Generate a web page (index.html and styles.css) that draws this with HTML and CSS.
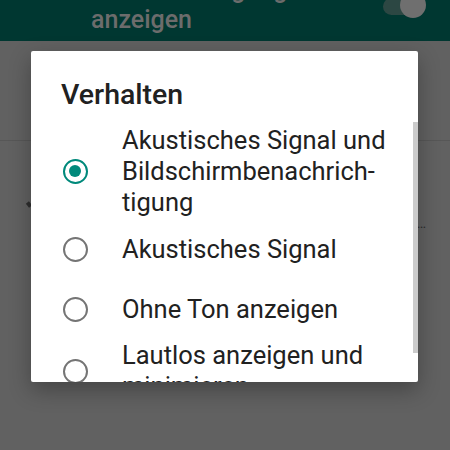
FILE: index.html
```html
<!DOCTYPE html>
<html>

<head>
    <meta name="viewport" content="width=device-width,initial-scale=1.0">
    <title>Verhalten</title>
    <link rel="stylesheet" href="styles.css">
</head>

<body>
    <div class="screen">
        <header class="app-bar">
            <div class="app-title">Benachrichtigungen anzeigen</div>
            <div class="switch"><span class="switch-thumb"></span></div>
        </header>
        <div class="prefs">
            <div class="pref pref-top"></div>
            <div class="pref pref-summary">
                <span class="mark"></span>
                <span class="more">…</span>
            </div>
        </div>

        <div class="dialog">
            <div class="dialog-title">Verhalten</div>
            <ul class="options">
                <li class="option">
                    <span class="radio checked"></span>
                    <span class="label">Akustisches Signal und Bildschirmbenachrich&shy;tigung</span>
                </li>
                <li class="option">
                    <span class="radio"></span>
                    <span class="label">Akustisches Signal</span>
                </li>
                <li class="option">
                    <span class="radio"></span>
                    <span class="label">Ohne Ton anzeigen</span>
                </li>
                <li class="option">
                    <span class="radio"></span>
                    <span class="label">Lautlos anzeigen und minimieren</span>
                </li>
            </ul>
            <div class="scrollbar"></div>
        </div>
    </div>
</body>

</html>
```

FILE: styles.css
```css
body {
    margin: 0;
    padding: 0;
    font-family: Roboto, "Noto Sans", sans-serif;
    background: #616161;
}

.screen {
    position: relative;
    width: 450px;
    height: 450px;
    overflow: hidden;
    background: #616161;
}

.app-bar {
    position: relative;
    height: 41px;
    background: #003731;
    overflow: hidden;
    padding-left: 91px;
    box-sizing: border-box;
}

.app-title {
    width: 290px;
    margin-top: -25px;
    font-size: 25px;
    line-height: 30px;
    font-weight: 500;
    color: #6c6c6c;
}

.switch {
    position: absolute;
    left: 383px;
    top: -2px;
    width: 37px;
    height: 17px;
    border-radius: 9px;
    background: #2c4743;
}

.switch-thumb {
    position: absolute;
    left: 17px;
    top: -6px;
    width: 26px;
    height: 26px;
    border-radius: 50%;
    background: #6f6f6f;
}

.pref-top {
    height: 99px;
    border-bottom: 1px solid #575757;
}

.pref-summary {
    display: flex;
    justify-content: space-between;
    align-items: flex-start;
    padding: 61px 24px 0 27px;
    height: 40px;
}

.mark {
    width: 4px;
    height: 5px;
    background: #2e2e2e;
    transform: rotate(-40deg);
}

.more {
    margin-top: 14px;
    font-size: 14px;
    line-height: 14px;
    color: #2e2e2e;
}

.dialog {
    position: absolute;
    left: 31px;
    top: 51px;
    width: 387px;
    height: 331px;
    background: #fff;
    border-radius: 2px;
    overflow: hidden;
    box-shadow: 0 8px 22px rgba(0, 0, 0, 0.3);
}

.dialog-title {
    padding: 27px 30px 0 30px;
    font-size: 28.5px;
    line-height: 34px;
    font-weight: 500;
    color: #212121;
}

.options {
    list-style-type: none;
    margin: 0;
    padding: 12px 0 0 0;
}

.option {
    display: flex;
    align-items: center;
    min-height: 60px;
    padding: 1px 0;
    box-sizing: border-box;
}

.radio {
    flex: none;
    position: relative;
    width: 25px;
    height: 25px;
    margin: 0 34px 0 32px;
    border: 2.5px solid #757575;
    border-radius: 50%;
    box-sizing: border-box;
}

.radio.checked {
    border-color: #00897b;
}

.radio.checked::after {
    content: "";
    position: absolute;
    left: 4px;
    top: 4px;
    width: 12px;
    height: 12px;
    border-radius: 50%;
    background: #00897b;
}

.label {
    width: 275px;
    font-size: 25.5px;
    line-height: 31px;
    color: #212121;
    hyphens: manual;
}

.scrollbar {
    position: absolute;
    right: 0;
    top: 71px;
    width: 5px;
    height: 231px;
    background: #cbcbcb;
}
```
